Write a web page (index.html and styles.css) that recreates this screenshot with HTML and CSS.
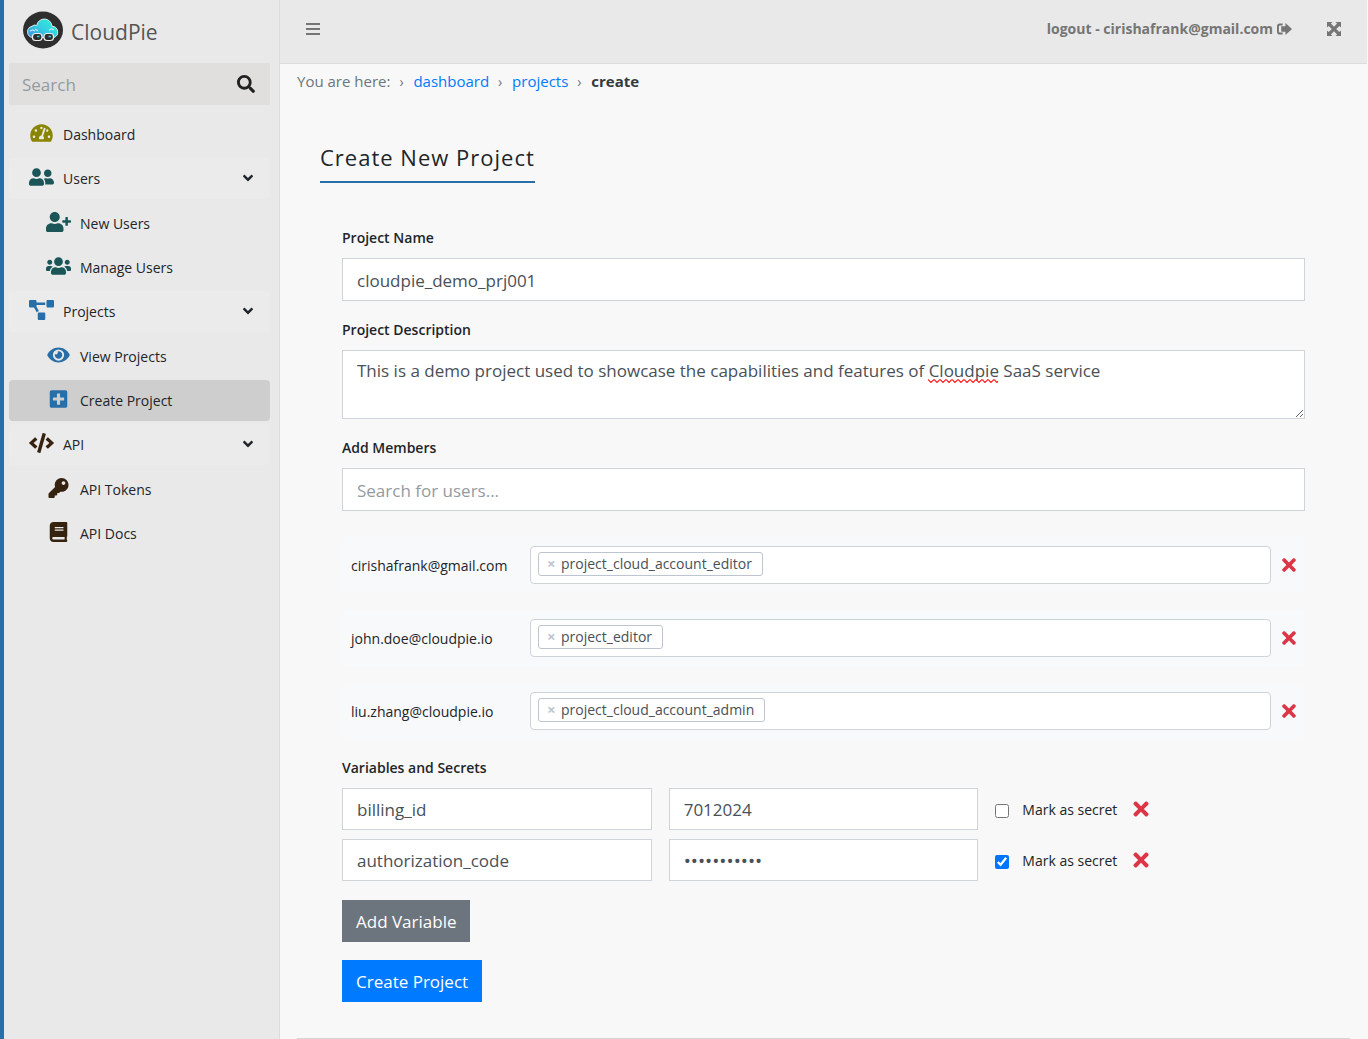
FILE: index.html
```html
<!DOCTYPE html>
<html lang="en">
<head>
  <meta charset="UTF-8" />
  <meta name="viewport" content="width=device-width, initial-scale=1.0"/>
  <title>CloudPie - Create Project</title>
  <link rel="stylesheet" href="styles.css">
</head>
<body>
  <!-- icon set -->
  <svg class="sprite" aria-hidden="true">
    <symbol id="i-times" viewBox="0 0 352 512"><path d="M242.72 256l100.07-100.07c12.28-12.28 12.28-32.19 0-44.48l-22.24-22.24c-12.28-12.28-32.19-12.28-44.48 0L176 189.28 75.93 89.21c-12.28-12.28-32.19-12.28-44.48 0L9.21 111.45c-12.28 12.28-12.28 32.19 0 44.48L109.28 256 9.21 356.07c-12.28 12.28-12.28 32.19 0 44.48l22.24 22.24c12.28 12.28 32.2 12.28 44.48 0L176 322.72l100.07 100.07c12.28 12.28 32.2 12.28 44.48 0l22.24-22.24c12.28-12.28 12.28-32.19 0-44.48L242.72 256z"/></symbol>
    <symbol id="i-angle" viewBox="0 0 320 512"><path d="M143 352.3L7 216.3c-9.4-9.4-9.4-24.6 0-33.9l22.6-22.6c9.4-9.4 24.6-9.4 33.9 0l96.4 96.4 96.4-96.4c9.4-9.4 24.6-9.4 33.9 0l22.6 22.6c9.4 9.4 9.4 24.6 0 33.9l-136 136c-9.2 9.4-24.4 9.4-33.8 0z"/></symbol>
    <symbol id="i-search" viewBox="0 0 512 512"><path d="M505 442.7L405.3 343c-4.5-4.5-10.6-7-17-7H372c27.6-35.3 44-79.7 44-128C416 93.1 322.9 0 208 0S0 93.1 0 208s93.1 208 208 208c48.3 0 92.7-16.4 128-44v16.3c0 6.4 2.5 12.5 7 17l99.7 99.7c9.4 9.4 24.6 9.4 33.9 0l28.3-28.3c9.4-9.4 9.4-24.6.1-34zM208 336c-70.7 0-128-57.2-128-128 0-70.7 57.2-128 128-128 70.7 0 128 57.2 128 128 0 70.7-57.2 128-128 128z"/></symbol>
    <symbol id="i-tach" viewBox="0 0 576 512"><path d="M288 32C128.94 32 0 160.94 0 320c0 52.8 14.25 102.26 39.06 144.8 5.61 9.62 16.3 15.2 27.44 15.2h443c11.14 0 21.83-5.58 27.44-15.2C561.75 422.26 576 372.8 576 320c0-159.06-128.94-288-288-288zm0 64c14.71 0 26.58 10.13 30.32 23.65-1.11 2.26-2.64 4.23-3.45 6.67l-9.22 27.67c-5.13 3.49-10.97 6.01-17.64 6.01-17.67 0-32-14.33-32-32S270.33 96 288 96zM96 384c-17.67 0-32-14.33-32-32s14.33-32 32-32 32 14.33 32 32-14.33 32-32 32zm48-160c-17.67 0-32-14.33-32-32s14.33-32 32-32 32 14.33 32 32-14.33 32-32 32zm246.77-72.41l-61.33 184C343.13 347.33 352 364.54 352 384c0 11.72-3.38 22.55-8.88 32H232.88c-5.5-9.45-8.88-20.28-8.88-32 0-33.94 26.5-61.43 59.9-63.59l61.34-184.01c4.17-12.56 17.73-19.45 30.36-15.17 12.57 4.19 19.35 17.79 15.17 30.36zm14.66 57.2l15.52-46.55c3.47-1.29 7.13-2.23 11.05-2.23 17.67 0 32 14.33 32 32s-14.33 32-32 32c-11.38-.01-20.89-6.28-26.57-15.22zM480 384c-17.67 0-32-14.33-32-32s14.33-32 32-32 32 14.33 32 32-14.33 32-32 32z"/></symbol>
    <symbol id="i-friends" viewBox="0 0 640 512"><path d="M192 256c61.9 0 112-50.1 112-112S253.9 32 192 32 80 82.1 80 144s50.1 112 112 112zm76.8 32h-8.3c-20.8 10-43.9 16-68.5 16s-47.6-6-68.5-16h-8.3C51.6 288 0 339.6 0 403.2V432c0 26.5 21.5 48 48 48h288c26.5 0 48-21.5 48-48v-28.8c0-63.6-51.6-115.2-115.2-115.2zM480 256c53 0 96-43 96-96s-43-96-96-96-96 43-96 96 43 96 96 96zm48 32h-3.8c-13.9 4.8-28.6 8-44.2 8s-30.3-3.2-44.2-8H432c-20.4 0-39.2 5.9-55.7 15.4 24.4 26.3 39.7 61.2 39.7 99.8v38.4c0 2.2-.5 4.3-.6 6.4H592c26.5 0 48-21.5 48-48 0-61.9-50.1-112-112-112z"/></symbol>
    <symbol id="i-user-plus" viewBox="0 0 640 512"><path d="M624 208h-64v-64c0-8.8-7.2-16-16-16h-32c-8.8 0-16 7.2-16 16v64h-64c-8.8 0-16 7.2-16 16v32c0 8.8 7.2 16 16 16h64v64c0 8.8 7.2 16 16 16h32c8.8 0 16-7.2 16-16v-64h64c8.8 0 16-7.2 16-16v-32c0-8.8-7.2-16-16-16zm-400 48c70.7 0 128-57.3 128-128S294.7 0 224 0 96 57.3 96 128s57.3 128 128 128zm89.6 32h-16.7c-22.2 10.2-46.9 16-72.9 16s-50.6-5.8-72.9-16h-16.7C60.2 288 0 348.2 0 422.4V464c0 26.5 21.5 48 48 48h352c26.5 0 48-21.5 48-48v-41.6c0-74.2-60.2-134.4-134.4-134.4z"/></symbol>
    <symbol id="i-users" viewBox="0 0 640 512"><path d="M96 224c35.3 0 64-28.7 64-64s-28.7-64-64-64-64 28.7-64 64 28.7 64 64 64zm448 0c35.3 0 64-28.7 64-64s-28.7-64-64-64-64 28.7-64 64 28.7 64 64 64zm32 32h-64c-17.6 0-33.5 7.1-45.1 18.6 40.3 22.1 68.9 62 75.1 109.4h66c17.7 0 32-14.3 32-32v-32c0-35.3-28.7-64-64-64zm-256 0c61.9 0 112-50.1 112-112S381.9 32 320 32 208 82.1 208 144s50.1 112 112 112zm76.8 32h-8.3c-20.8 10-43.9 16-68.5 16s-47.6-6-68.5-16h-8.3C179.6 288 128 339.6 128 403.2V432c0 26.5 21.5 48 48 48h288c26.5 0 48-21.5 48-48v-28.8c0-63.6-51.6-115.2-115.2-115.2zm-223.7-13.4C161.5 263.1 145.6 256 128 256H64c-35.3 0-64 28.7-64 64v32c0 17.7 14.3 32 32 32h65.9c6.3-47.4 34.9-87.3 75.2-109.4z"/></symbol>
    <symbol id="i-diagram" viewBox="0 0 640 512"><path d="M384 320H256c-17.67 0-32 14.33-32 32v128c0 17.67 14.33 32 32 32h128c17.67 0 32-14.33 32-32V352c0-17.67-14.33-32-32-32zM192 32c0-17.67-14.33-32-32-32H32C14.33 0 0 14.33 0 32v128c0 17.67 14.33 32 32 32h95.72l73.16 128.04C211.98 300.98 232.4 288 256 288h.28L192 175.51V128h224V64H192V32zM608 0H480c-17.67 0-32 14.33-32 32v128c0 17.67 14.33 32 32 32h128c17.67 0 32-14.33 32-32V32c0-17.67-14.33-32-32-32z"/></symbol>
    <symbol id="i-eye" viewBox="0 0 576 512"><path d="M572.52 241.4C518.29 135.59 410.93 64 288 64S57.68 135.64 3.48 241.41a32.35 32.35 0 0 0 0 29.19C57.71 376.41 165.07 448 288 448s230.32-71.64 284.52-177.41a32.35 32.35 0 0 0 0-29.19zM288 400a144 144 0 1 1 144-144 143.93 143.93 0 0 1-144 144zm0-240a95.31 95.31 0 0 0-25.31 3.79 47.85 47.85 0 0 1-66.9 66.9A95.78 95.78 0 1 0 288 160z"/></symbol>
    <symbol id="i-plus" viewBox="0 0 448 512"><path d="M400 32H48C21.5 32 0 53.5 0 80v352c0 26.5 21.5 48 48 48h352c26.5 0 48-21.5 48-48V80c0-26.5-21.5-48-48-48zm-32 252c0 6.6-5.4 12-12 12h-92v92c0 6.6-5.4 12-12 12h-56c-6.6 0-12-5.4-12-12v-92H92c-6.6 0-12-5.4-12-12v-56c0-6.6 5.4-12 12-12h92v-92c0-6.6 5.4-12 12-12h56c6.6 0 12 5.4 12 12v92h92c6.6 0 12 5.4 12 12v56z"/></symbol>
    <symbol id="i-code" viewBox="0 0 640 512"><path d="M278.9 511.5l-61-17.7c-6.4-1.8-10-8.5-8.2-14.9L346.2 8.7c1.8-6.4 8.5-10 14.9-8.2l61 17.7c6.4 1.8 10 8.5 8.2 14.9L293.8 503.3c-1.9 6.4-8.5 10.1-14.9 8.2zm-114-112.2l43.5-46.4c4.6-4.9 4.3-12.7-.8-17.2L117 256l90.6-79.7c5.1-4.5 5.5-12.3.8-17.2l-43.5-46.4c-4.5-4.8-12.1-5.1-17-.5L3.8 247.2c-5.1 4.7-5.1 12.8 0 17.5l144.1 135.1c4.9 4.6 12.5 4.4 17-.5zm327.2.6l144.1-135.1c5.1-4.7 5.1-12.8 0-17.5L492.1 112.1c-4.8-4.5-12.4-4.3-17 .5L431.6 159c-4.6 4.9-4.3 12.7.8 17.2L523 256l-90.6 79.7c-5.1 4.5-5.5 12.3-.8 17.2l43.5 46.4c4.5 4.9 12.1 5.1 17 .6z"/></symbol>
    <symbol id="i-key" viewBox="0 0 512 512"><path d="M512 176.001C512 273.203 433.202 352 336 352c-11.22 0-22.19-1.062-32.827-3.069l-24.012 27.014A23.999 23.999 0 0 1 261.223 384H224v40c0 13.255-10.745 24-24 24h-40v40c0 13.255-10.745 24-24 24H24c-13.255 0-24-10.745-24-24v-78.059c0-6.365 2.529-12.47 7.029-16.971l161.802-161.802C163.108 213.814 160 195.271 160 176 160 78.798 238.797.001 335.999 0 433.488-.001 512 78.511 512 176.001zM336 128c0 26.51 21.49 48 48 48s48-21.49 48-48-21.49-48-48-48-48 21.49-48 48z"/></symbol>
    <symbol id="i-book" viewBox="0 0 448 512"><path d="M448 360V24c0-13.3-10.7-24-24-24H96C43 0 0 43 0 96v320c0 53 43 96 96 96h328c13.3 0 24-10.7 24-24v-16c0-7.5-3.5-14.3-8.9-18.7-4.2-15.4-4.2-59.3 0-74.7 5.4-4.3 8.9-11.1 8.9-18.6zM128 134c0-3.3 2.7-6 6-6h212c3.3 0 6 2.7 6 6v20c0 3.3-2.7 6-6 6H134c-3.3 0-6-2.7-6-6v-20zm0 64c0-3.3 2.7-6 6-6h212c3.3 0 6 2.7 6 6v20c0 3.3-2.7 6-6 6H134c-3.3 0-6-2.7-6-6v-20zm253.4 250H96c-17.7 0-32-14.3-32-32 0-17.6 14.4-32 32-32h285.4c-1.9 17.1-1.9 46.9 0 64z"/></symbol>
    <symbol id="i-bars" viewBox="0 0 14 14"><path d="M0 1h14v2H0zM0 6h14v2H0zM0 11h14v2H0z"/></symbol>
    <symbol id="i-signout" viewBox="0 0 16 14"><path d="M6 1.2H3A3 3 0 0 0 0 4.2v5.6a3 3 0 0 0 3 3h3v-2H3.2a1.2 1.2 0 0 1-1.2-1.2V4.4a1.2 1.2 0 0 1 1.2-1.2H6zM9 .5L16 7 9 13.5V10H4.5V4H9z"/></symbol>
    <symbol id="i-expand" viewBox="0 0 14 14"><path d="M0 0h5.5L3.9 1.6 7 4.8l3.1-3.2L8.5 0H14v5.5l-1.6-1.6L9.2 7l3.2 3.1L14 8.5V14H8.5l1.6-1.6L7 9.2l-3.1 3.2L5.5 14H0V8.5l1.6 1.6L4.8 7 1.6 3.9 0 5.5z"/></symbol>
  </svg>

  <div class="wrapper">
    <aside class="sidebar">
      <a href="#" class="brand">
        <svg class="brand-logo" viewBox="0 0 40 38" aria-hidden="true">
          <defs>
            <linearGradient id="cloud" x1="0" y1="1" x2="1" y2="0">
              <stop offset="0" stop-color="#3a8fe0"/>
              <stop offset=".5" stop-color="#35cfe3"/>
              <stop offset="1" stop-color="#2ff5cf"/>
            </linearGradient>
          </defs>
          <ellipse cx="20" cy="19" rx="20" ry="18.5" fill="#2e2e2e"/>
          <path d="M9.5 26.5a5.7 5.7 0 0 1-.5-11.2 4 4 0 0 1 4.700-.8 7.7 7.7 0 0 1 15.3.8 5.8 5.8 0 0 1 2 11.2z" fill="url(#cloud)" stroke="#e9f7f7" stroke-width=".9"/>
          <path d="M7 20q3-2 5 0M26 19q3-2.5 5 0M12 18l3 2" fill="none" stroke="#e9f7f7" stroke-width="1"/>
          <rect x="9.5" y="22.5" width="9.5" height="7" rx="3" fill="#2e2e2e" stroke="#eee" stroke-width="1.2"/>
          <rect x="21" y="22.5" width="9.5" height="7" rx="3" fill="#2e2e2e" stroke="#eee" stroke-width="1.2"/>
          <path d="M14 25.5h2.5M25.5 25.5h2.5" stroke="#35cfe3" stroke-width="1.5"/>
        </svg>
        <span>CloudPie</span>
      </a>

      <form class="search">
        <input type="search" placeholder="Search" aria-label="Search">
        <button type="button" aria-label="Search"><svg class="icon"><use href="#i-search"/></svg></button>
      </form>

      <nav>
        <ul class="menu">
          <li><a href="#" class="item"><svg class="icon olive"><use href="#i-tach"/></svg>Dashboard</a></li>
          <li>
            <a href="#" class="item parent"><svg class="icon teal"><use href="#i-friends"/></svg>Users<svg class="arrow"><use href="#i-angle"/></svg></a>
            <ul class="submenu">
              <li><a href="#" class="item"><svg class="icon teal"><use href="#i-user-plus"/></svg>New Users</a></li>
              <li><a href="#" class="item"><svg class="icon teal"><use href="#i-users"/></svg>Manage Users</a></li>
            </ul>
          </li>
          <li>
            <a href="#" class="item parent"><svg class="icon blue"><use href="#i-diagram"/></svg>Projects<svg class="arrow"><use href="#i-angle"/></svg></a>
            <ul class="submenu">
              <li><a href="#" class="item"><svg class="icon blue"><use href="#i-eye"/></svg>View Projects</a></li>
              <li><a href="#" class="item active"><svg class="icon blue"><use href="#i-plus"/></svg>Create Project</a></li>
            </ul>
          </li>
          <li>
            <a href="#" class="item parent"><svg class="icon brown"><use href="#i-code"/></svg>API<svg class="arrow"><use href="#i-angle"/></svg></a>
            <ul class="submenu">
              <li><a href="#" class="item"><svg class="icon brown"><use href="#i-key"/></svg>API Tokens</a></li>
              <li><a href="#" class="item"><svg class="icon brown"><use href="#i-book"/></svg>API Docs</a></li>
            </ul>
          </li>
        </ul>
      </nav>
    </aside>

    <div class="main">
      <header class="topbar">
        <button type="button" class="top-btn" aria-label="Toggle menu"><svg class="icon"><use href="#i-bars"/></svg></button>
        <a href="#" class="logout">logout - cirishafrank@gmail.com<svg class="icon"><use href="#i-signout"/></svg></a>
        <button type="button" class="top-btn" aria-label="Fullscreen"><svg class="icon"><use href="#i-expand"/></svg></button>
      </header>

      <main class="content">
        <nav class="breadcrumb">
          <span>You are here:</span>
          <span class="sep">›</span>
          <a href="#">dashboard</a>
          <span class="sep">›</span>
          <a href="#">projects</a>
          <span class="sep">›</span>
          <strong>create</strong>
        </nav>

        <h1>Create New Project</h1>

        <form class="project-form">
          <label for="name">Project Name</label>
          <input class="field" type="text" id="name" value="cloudpie_demo_prj001">

          <label for="desc">Project Description</label>
          <div class="desc">
            <textarea class="field" id="desc" rows="2">This is a demo project used to showcase the capabilities and features of Cloudpie SaaS service</textarea>
            <svg class="squiggle" aria-hidden="true">
              <pattern id="wave" width="6" height="4" patternUnits="userSpaceOnUse"><path d="M0 .5l3 3 3-3" fill="none" stroke="#f22" stroke-width="1.2"/></pattern>
              <rect width="100%" height="4" fill="url(#wave)"/>
            </svg>
          </div>

          <label for="members">Add Members</label>
          <input class="field" type="text" id="members" placeholder="Search for users...">

          <ul class="members">
            <li class="member">
              <span class="email">cirishafrank@gmail.com</span>
              <div class="roles"><span class="chip"><button type="button" aria-label="Remove role">×</button>project_cloud_account_editor</span></div>
              <button type="button" class="remove" aria-label="Remove member"><svg><use href="#i-times"/></svg></button>
            </li>
            <li class="member">
              <span class="email">john.doe@cloudpie.io</span>
              <div class="roles"><span class="chip"><button type="button" aria-label="Remove role">×</button>project_editor</span></div>
              <button type="button" class="remove" aria-label="Remove member"><svg><use href="#i-times"/></svg></button>
            </li>
            <li class="member">
              <span class="email">liu.zhang@cloudpie.io</span>
              <div class="roles"><span class="chip"><button type="button" aria-label="Remove role">×</button>project_cloud_account_admin</span></div>
              <button type="button" class="remove" aria-label="Remove member"><svg><use href="#i-times"/></svg></button>
            </li>
          </ul>

          <fieldset>
            <legend>Variables and Secrets</legend>
            <div class="variable">
              <input class="field" type="text" value="billing_id" aria-label="Variable name">
              <input class="field" type="text" value="7012024" aria-label="Variable value">
              <div class="secret">
                <input type="checkbox" id="secret1"><label for="secret1">Mark as secret</label>
                <button type="button" class="remove" aria-label="Remove variable"><svg><use href="#i-times"/></svg></button>
              </div>
            </div>
            <div class="variable">
              <input class="field" type="text" value="authorization_code" aria-label="Variable name">
              <input class="field" type="password" value="abcdefghijk" aria-label="Variable value">
              <div class="secret">
                <input type="checkbox" id="secret2" checked><label for="secret2">Mark as secret</label>
                <button type="button" class="remove" aria-label="Remove variable"><svg><use href="#i-times"/></svg></button>
              </div>
            </div>
          </fieldset>

          <button type="button" class="btn btn-secondary">Add Variable</button>
          <button type="submit" class="btn btn-primary">Create Project</button>
        </form>

        <hr>
      </main>
    </div>
  </div>
</body>
</html>
```
FILE: styles.css
```css
* {
  box-sizing: border-box;
}

body {
  margin: 0;
  font-family: "Open Sans", "Noto Sans", sans-serif;
  font-size: 14px;
  line-height: 21px;
  color: #212529;
  background: #f8f8f8;
}

button,
input,
textarea {
  font-family: inherit;
}

button {
  padding: 0;
  border: 0;
  background: none;
  cursor: pointer;
}

a {
  color: #007bff;
  text-decoration: none;
}

ul {
  margin: 0;
  padding: 0;
  list-style: none;
}

svg {
  fill: currentColor;
}

.sprite {
  position: absolute;
  width: 0;
  height: 0;
}

.wrapper {
  display: flex;
  min-height: 100vh;
  border-left: 4px solid #286ea7;
}

/* sidebar */
.sidebar {
  flex: 0 0 276px;
  min-width: 0;
  padding: 0 9px 0 5px;
  background: #e9e9e9;
  border-right: 1px solid #dcdcdc;
}

.brand {
  display: flex;
  align-items: center;
  gap: 8px;
  height: 63px;
  padding: 0 14px 4px;
  font-size: 21px;
  color: #555;
}

.brand span {
  padding-top: 6px;
}

.brand-logo {
  width: 40px;
  height: 38px;
}

.search {
  display: flex;
  height: 42px;
  padding: 0 15px 0 13px;
  background: #e0dfde;
}

.search input {
  flex: 1;
  min-width: 0;
  padding: 0;
  border: 0;
  outline: 0;
  background: none;
  font-size: 17px;
}

.search input::placeholder {
  color: #939ba2;
}

.search button {
  color: #212121;
}

.search .icon {
  display: block;
  width: 18px;
  height: 18px;
}

.menu {
  padding-top: 9px;
}

.item {
  display: flex;
  align-items: center;
  height: 41px;
  margin-bottom: 3px;
  padding: 0 17px 0 20px;
  border-radius: 4px;
  color: #212529;
}

.item .icon {
  width: 25px;
  height: 20px;
  margin: 0 9px 4px 0;
}

.parent {
  background: #ebebeb;
}

.submenu {
  padding-top: 1px;
}

.submenu .item {
  padding-left: 37px;
}

.submenu .active {
  background: #cecece;
}

.arrow {
  width: 10px;
  height: 16px;
  margin: 0 0 2px auto;
}

.olive {
  color: #8a8500;
}

.teal {
  color: #1a5558;
}

.blue {
  color: #286ea7;
}

.brown {
  color: #35220f;
}

/* top bar */
.main {
  flex: 1;
  min-width: 0;
}

.topbar {
  display: flex;
  align-items: center;
  height: 64px;
  margin-right: 1px;
  padding: 0 26px 6px;
  border-bottom: 1px solid #dcdcdc;
  background: #e9e9e9;
  color: #757575;
}

.topbar .icon {
  display: block;
  width: 14px;
  height: 14px;
}

.top-btn {
  color: #757575;
}

.logout {
  display: flex;
  align-items: center;
  gap: 4px;
  margin: 0 35px 0 auto;
  font-weight: 700;
  color: #757575;
}

.logout .icon {
  width: 15px;
}

/* page */
.content {
  padding: 7px 18px 0 17px;
}

.breadcrumb {
  display: flex;
  align-items: center;
  gap: 9px;
  font-size: 15px;
  color: #6c757d;
}

.sep {
  width: 5px;
  font-size: 14px;
}

.breadcrumb strong {
  font-weight: 700;
  color: #343a40;
}

h1 {
  display: inline-block;
  margin: 50px 23px 0;
  padding-bottom: 9px;
  border-bottom: 2px solid #286ea7;
  font-size: 22px;
  font-weight: 400;
  line-height: 30px;
  letter-spacing: 1px;
}

.project-form {
  padding: 44px 45px 0;
}

.project-form > label,
legend {
  display: block;
  padding: 0;
  margin-bottom: 10px;
  font-weight: 600;
}

.field {
  display: block;
  width: 100%;
  height: 43px;
  margin: 0 0 18px;
  padding: 1px 14px 0;
  border: 1px solid #ced4da;
  border-radius: 0;
  background: #fff;
  font-size: 17px;
  line-height: 26px;
  color: #495057;
}

.field::placeholder {
  color: #939ba2;
}

.field[type="password"] {
  font-size: 19px;
}

.desc {
  position: relative;
}

textarea.field {
  height: 69px;
  padding: 7px 14px;
  resize: vertical;
}

/* spelling mark under the unknown word */
.squiggle {
  position: absolute;
  top: 29px;
  left: 586px;
  width: 70px;
  height: 4px;
  pointer-events: none;
}

.members {
  padding: 8px 0 1px;
}

.member {
  display: flex;
  align-items: center;
  margin-bottom: 17px;
  padding: 9px;
  background: #f8f9fb;
}

.email {
  flex: 0 0 179px;
}

.roles {
  flex: 1;
  display: flex;
  align-items: flex-start;
  height: 38px;
  margin-right: 11px;
  padding: 5px 7px;
  border: 1px solid #ced4da;
  border-radius: 4px;
  background: #fff;
}

.chip {
  display: flex;
  align-items: center;
  height: 24px;
  padding: 0 10px 2px 8px;
  border: 1px solid #bdc6d0;
  border-radius: 3px;
  color: #495057;
}

.chip button {
  width: 14px;
  text-align: left;
  font-size: 15px;
  font-weight: 700;
  color: #bdc6d0;
}

.remove {
  color: #dc3545;
}

.remove svg {
  display: block;
  width: 14px;
  height: 20px;
}

fieldset {
  margin: 0;
  padding: 0 0 1px;
  border: 0;
}

.variable {
  display: grid;
  grid-template-columns: repeat(3, 1fr);
  gap: 17px;
}

.variable + .variable {
  margin-top: 9px;
}

.variable .field {
  height: 42px;
  margin: 0;
}

.secret {
  display: flex;
  align-items: center;
}

.secret input {
  width: 14px;
  height: 14px;
  margin: 3px 13px 0 0;
}

.secret .remove {
  margin-left: 16px;
}

.secret .remove svg {
  width: 16px;
  height: 22px;
}

.btn {
  display: block;
  height: 42px;
  margin-top: 18px;
  padding: 0 14px;
  font-size: 17px;
  color: #fff;
}

.btn-secondary {
  background: #6c757d;
}

.btn-primary {
  background: #007bff;
}

hr {
  margin: 36px 0 0;
  border: 0;
  border-top: 1px solid #d5d5d5;
}
```
